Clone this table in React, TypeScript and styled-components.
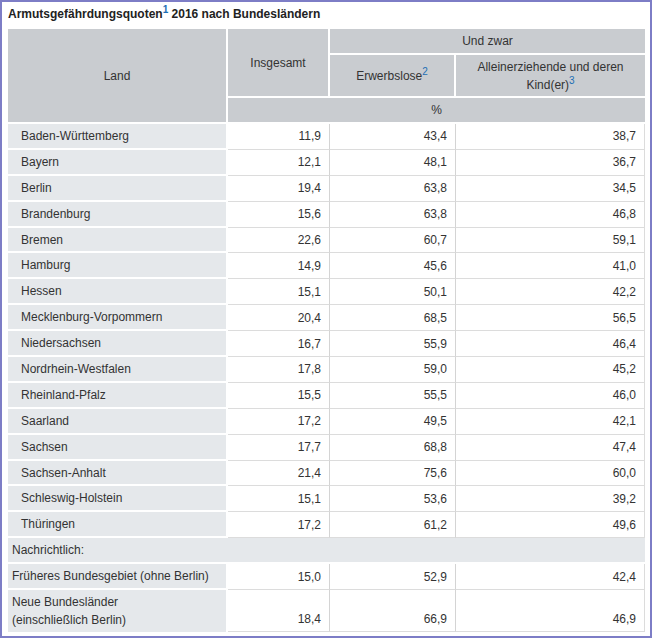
import React from "react";
import styled, { createGlobalStyle } from "styled-components";

const Global = createGlobalStyle`
  html, body { margin: 0; padding: 0; background: #fff; }
  body { font-family: "Liberation Sans", Arial, sans-serif; color: #333; }
`;

const Frame = styled.div`
  box-sizing: border-box;
  width: 652px;
  height: 638px;
  border: 2px solid #7d7dc6;
  padding: 5px 5px 0 6px;
  background: #fff;
`;

const Title = styled.h1`
  margin: 0 0 7px 0;
  font-size: 12px;
  line-height: 15px;
  font-weight: bold;
  color: #222;
`;

const Sup = styled.sup`
  color: #1c6fb5;
  font-size: 10px;
  line-height: 0;
  vertical-align: 5px;
  font-weight: inherit;
`;

const Table = styled.table`
  width: 637px;
  table-layout: fixed;
  border-collapse: separate;
  border-spacing: 0;
  font-size: 12px;
  color: #333;
`;

const Th = styled.th<{ $h?: number }>`
  background: #c9ccd0;
  font-weight: normal;
  text-align: center;
  vertical-align: middle;
  padding: 0 6px;
  line-height: 18px;
  border-right: 2px solid #fff;
  border-bottom: 2px solid #fff;
  height: ${(p) => (p.$h ? `${p.$h}px` : "auto")};
  box-sizing: border-box;
  &:last-child { border-right: none; }
`;

const Row = styled.tr<{ $h?: number }>`
  height: ${(p) => p.$h ?? 25.9}px;
`;

const LandCell = styled.td<{ $indent?: boolean }>`
  background: #e5e8eb;
  border-bottom: 2px solid #fff;
  border-right: 2px solid #fff;
  padding: 0 4px 0 ${(p) => (p.$indent ? 13 : 4)}px;
  line-height: 18px;
  vertical-align: middle;
  box-sizing: border-box;
  white-space: nowrap;
`;

const ValCell = styled.td<{ $bottom?: boolean }>`
  background: #fff;
  text-align: right;
  padding: 0 8px 0 4px;
  line-height: 18px;
  border-bottom: 1px solid #dcdcdc;
  border-right: 1px solid #d4d4d4;
  vertical-align: ${(p) => (p.$bottom ? "bottom" : "middle")};
  padding-bottom: ${(p) => (p.$bottom ? 3 : 0)}px;
  box-sizing: border-box;
  &:last-child { border-right: 1px solid #dcdcdc; }
`;

const NoteCell = styled.td`
  background: #e5e8eb;
  padding: 0 4px;
  line-height: 18px;
  border-bottom: 2px solid #fff;
  box-sizing: border-box;
`;

const LastLand = styled(LandCell)`
  white-space: normal;
  border-bottom: none;
  vertical-align: top;
  padding-top: 3px;
`;

type R = [string, string, string, string];

const states: R[] = [
  ["Baden-Württemberg", "11,9", "43,4", "38,7"],
  ["Bayern", "12,1", "48,1", "36,7"],
  ["Berlin", "19,4", "63,8", "34,5"],
  ["Brandenburg", "15,6", "63,8", "46,8"],
  ["Bremen", "22,6", "60,7", "59,1"],
  ["Hamburg", "14,9", "45,6", "41,0"],
  ["Hessen", "15,1", "50,1", "42,2"],
  ["Mecklenburg-Vorpommern", "20,4", "68,5", "56,5"],
  ["Niedersachsen", "16,7", "55,9", "46,4"],
  ["Nordrhein-Westfalen", "17,8", "59,0", "45,2"],
  ["Rheinland-Pfalz", "15,5", "55,5", "46,0"],
  ["Saarland", "17,2", "49,5", "42,1"],
  ["Sachsen", "17,7", "68,8", "47,4"],
  ["Sachsen-Anhalt", "21,4", "75,6", "60,0"],
  ["Schleswig-Holstein", "15,1", "53,6", "39,2"],
  ["Thüringen", "17,2", "61,2", "49,6"],
];

export default function App() {
  return (
    <>
      <Global />
      <Frame>
        <Title>
          Armutsgefährdungsquoten<Sup>1</Sup> 2016 nach Bundesländern
        </Title>
        <Table>
          <colgroup>
            <col style={{ width: 220 }} />
            <col style={{ width: 102 }} />
            <col style={{ width: 126 }} />
            <col style={{ width: 189 }} />
          </colgroup>
          <thead>
            <tr>
              <Th rowSpan={3}>Land</Th>
              <Th rowSpan={2}>Insgesamt</Th>
              <Th colSpan={2} $h={26}>Und zwar</Th>
            </tr>
            <tr>
              <Th $h={43}>
                Erwerbslose<Sup>2</Sup>
              </Th>
              <Th $h={43}>
                Alleinerziehende und deren
                <br />
                Kind(er)<Sup>3</Sup>
              </Th>
            </tr>
            <tr>
              <Th colSpan={3} $h={26}>%</Th>
            </tr>
          </thead>
          <tbody>
            {states.map((r) => (
              <Row key={r[0]}>
                <LandCell $indent>{r[0]}</LandCell>
                <ValCell>{r[1]}</ValCell>
                <ValCell>{r[2]}</ValCell>
                <ValCell>{r[3]}</ValCell>
              </Row>
            ))}
            <Row>
              <NoteCell colSpan={4}>Nachrichtlich:</NoteCell>
            </Row>
            <Row>
              <LandCell>Früheres Bundesgebiet (ohne Berlin)</LandCell>
              <ValCell>15,0</ValCell>
              <ValCell>52,9</ValCell>
              <ValCell>42,4</ValCell>
            </Row>
            <Row $h={42}>
              <LastLand>
                Neue Bundesländer
                <br />
                (einschließlich Berlin)
              </LastLand>
              <ValCell $bottom>18,4</ValCell>
              <ValCell $bottom>66,9</ValCell>
              <ValCell $bottom>46,9</ValCell>
            </Row>
          </tbody>
        </Table>
      </Frame>
    </>
  );
}
